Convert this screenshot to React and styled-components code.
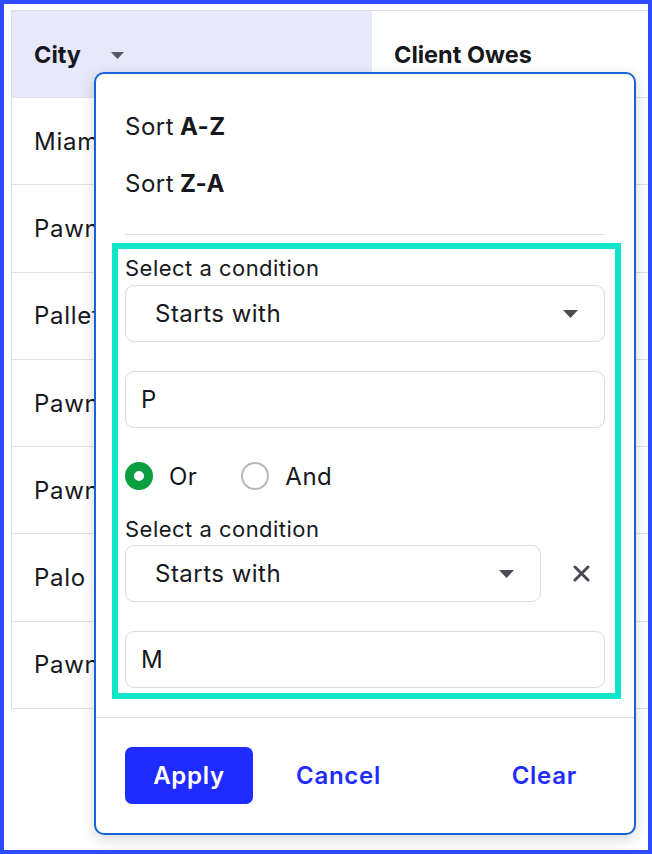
import React from 'react';
import styled, { createGlobalStyle } from 'styled-components';

const GlobalStyle = createGlobalStyle`
  html, body {
    margin: 0;
    padding: 0;
    background: #fff;
  }
  body {
    font-family: Inter, "Noto Sans", sans-serif;
    color: #16181d;
    letter-spacing: 0.03em;
  }
  * {
    box-sizing: border-box;
  }
`;

const Frame = styled.div`
  position: relative;
  width: 652px;
  height: 854px;
  border: 4px solid #2f4bff;
  background: #fff;
  overflow: hidden;
  padding: 6px 0 0 7px;
`;

const Table = styled.div`
  width: 900px;
  border-top: 1px solid #dedede;
  border-left: 1px solid #dedede;
`;

const Row = styled.div`
  display: grid;
  grid-template-columns: 360px 1fr;
  height: ${(p) => (p.$header ? '87px' : '87.3px')};
  border-bottom: 1px solid #e2e2e2;
`;

const Cell = styled.div`
  display: flex;
  align-items: center;
  padding-left: 22px;
  font-size: ${(p) => (p.$header ? '23.5px' : '24px')};
  font-weight: ${(p) => (p.$header ? 700 : 400)};
  letter-spacing: ${(p) => (p.$header ? '0' : '0.03em')};
  background: ${(p) => (p.$active ? '#e8e8fb' : 'transparent')};
  white-space: nowrap;
`;

const HeaderCaret = styled.svg`
  margin-left: 30px;
  margin-top: 2px;
`;

const Popup = styled.div`
  position: absolute;
  left: 90px;
  top: 68px;
  width: 542px;
  height: 763px;
  background: #fff;
  border: 2px solid #1763d9;
  border-radius: 10px;
  box-shadow: 0 4px 14px rgba(0, 0, 0, 0.16);
  padding: 24px 29px 0;
  display: flex;
  flex-direction: column;
`;

const SortItem = styled.div`
  height: 57px;
  display: flex;
  align-items: center;
  font-size: 24px;
  b {
    font-weight: 700;
    margin-left: 6px;
  }
`;

const Divider = styled.div`
  height: 1px;
  flex: none;
  background: #dedede;
  margin: ${(p) => (p.$full ? '18px -29px 0' : '22px 0 0')};
`;

const ConditionBox = styled.div`
  margin: 8px -16px 0 -13px;
  border: 6px solid #0fe6c8;
  padding: 7px 10px 5px 7px;
  display: flex;
  flex-direction: column;
`;

const Label = styled.div`
  font-size: 22px;
  line-height: 24px;
  margin-top: ${(p) => p.$top || 0}px;
  margin-bottom: ${(p) => p.$bottom || 5}px;
`;

const SelectRow = styled.div`
  display: flex;
  align-items: center;
`;

const Select = styled.div`
  flex: 1;
  height: 57px;
  border: 1px solid #dcdcdc;
  border-radius: 9px;
  display: flex;
  align-items: center;
  justify-content: space-between;
  padding: 0 26px 0 29px;
  font-size: 24px;
`;

const Input = styled.div`
  height: 57px;
  margin-top: 29px;
  border: 1px solid #dcdcdc;
  border-radius: 9px;
  display: flex;
  align-items: center;
  padding-left: 15px;
  font-size: 24px;
`;

const RemoveButton = styled.div`
  width: 64px;
  height: 57px;
  display: flex;
  align-items: center;
  justify-content: flex-end;
  padding-right: 15px;
`;

const RadioGroup = styled.div`
  display: flex;
  align-items: center;
  gap: 44px;
  margin-top: 34px;
  height: 28px;
`;

const RadioOption = styled.div`
  display: flex;
  align-items: center;
  gap: 16px;
  font-size: 24px;
`;

const RadioCircle = styled.span`
  width: 28px;
  height: 28px;
  border-radius: 50%;
  border: ${(p) => (p.$checked ? '9px solid #0a9e40' : '2px solid #b8b8b8')};
  background: #fff;
`;

const Footer = styled.div`
  display: flex;
  align-items: center;
  padding-top: 29px;
`;

const ApplyButton = styled.button`
  width: 128px;
  height: 57px;
  border: none;
  border-radius: 7px;
  background: #1f2bff;
  color: #fff;
  font-family: Inter, sans-serif;
  font-size: 24px;
  font-weight: 600;
  letter-spacing: 0.03em;
`;

const TextButton = styled.button`
  border: none;
  background: none;
  padding: 0;
  color: #1f2bff;
  font-family: Inter, sans-serif;
  font-size: 24px;
  font-weight: 600;
  letter-spacing: 0.03em;
  margin-left: ${(p) => (p.$push ? 'auto' : '43px')};
  margin-right: ${(p) => (p.$push ? '28px' : '0')};
`;

const Caret = () => (
  <svg width="15" height="8" viewBox="0 0 15 8">
    <path d="M0 0 H15 L7.5 8 Z" fill="#4a4b55" />
  </svg>
);

const rows = [
  ['Miami', '$1,200'],
  ['Pawnee', '$840'],
  ['Pallet Town', '$0'],
  ['Pawnee', '$310'],
  ['Pawnee', '$95'],
  ['Palo Alto', '$4,020'],
  ['Pawnee', '$62'],
];

export default function App() {
  return (
    <>
      <GlobalStyle />
      <Frame>
        <Table>
          <Row $header>
            <Cell $header $active>
              City
              <HeaderCaret width="13" height="7" viewBox="0 0 13 7">
                <path d="M0 0 H13 L6.5 7 Z" fill="#58585f" />
              </HeaderCaret>
            </Cell>
            <Cell $header>Client Owes</Cell>
          </Row>
          {rows.map(([city, owes], i) => (
            <Row key={i}>
              <Cell>{city}</Cell>
              <Cell>{owes}</Cell>
            </Row>
          ))}
        </Table>

        <Popup>
          <SortItem>
            Sort<b>A-Z</b>
          </SortItem>
          <SortItem>
            Sort<b>Z-A</b>
          </SortItem>
          <Divider />

          <ConditionBox>
            <Label>Select a condition</Label>
            <SelectRow>
              <Select>
                Starts with
                <Caret />
              </Select>
            </SelectRow>
            <Input>P</Input>

            <RadioGroup>
              <RadioOption>
                <RadioCircle $checked />
                Or
              </RadioOption>
              <RadioOption>
                <RadioCircle />
                And
              </RadioOption>
            </RadioGroup>

            <Label $top={27} $bottom={4}>Select a condition</Label>
            <SelectRow>
              <Select>
                Starts with
                <Caret />
              </Select>
              <RemoveButton>
                <svg width="17" height="17" viewBox="0 0 17 17">
                  <path
                    d="M2 2 L15 15 M15 2 L2 15"
                    stroke="#4a4b55"
                    strokeWidth="3"
                    strokeLinecap="round"
                  />
                </svg>
              </RemoveButton>
            </SelectRow>
            <Input>M</Input>
          </ConditionBox>

          <Divider $full />
          <Footer>
            <ApplyButton>Apply</ApplyButton>
            <TextButton>Cancel</TextButton>
            <TextButton $push>Clear</TextButton>
          </Footer>
        </Popup>
      </Frame>
    </>
  );
}
